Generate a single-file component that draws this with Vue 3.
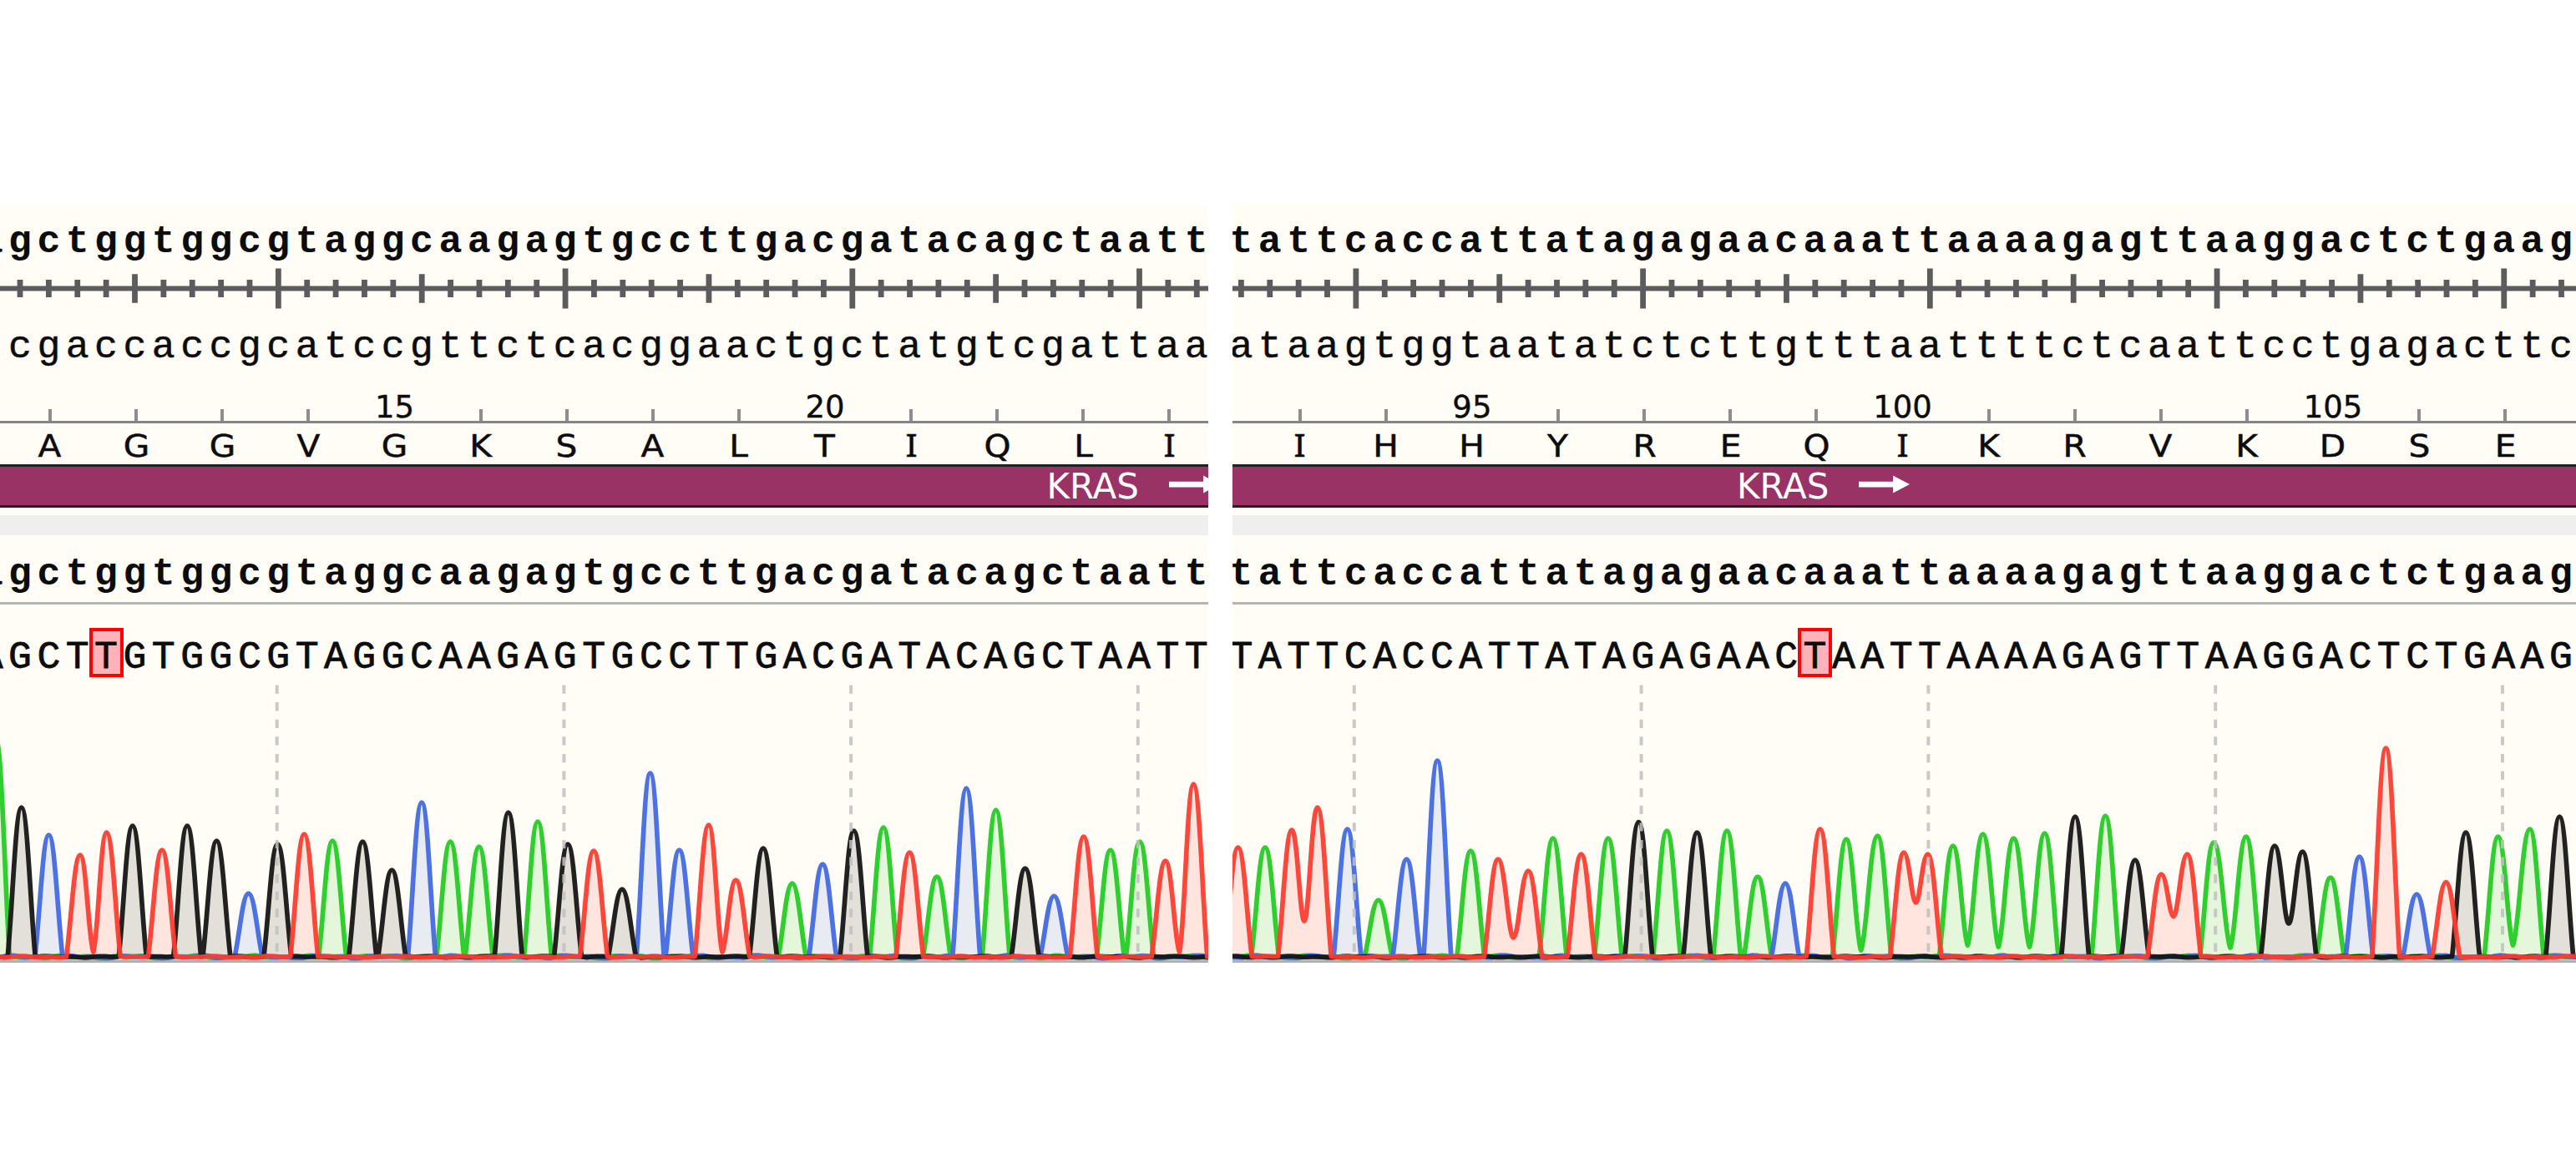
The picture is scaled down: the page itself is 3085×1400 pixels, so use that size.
<script setup>
const PITCH = 34.372
const BASE = 1145.5
const TOP = 820

const COLORS = { A: '#22cc22', C: '#4169e1', G: '#141414', T: '#ff3b30' }

const left = {
  id: 'left',
  width: 1447,
  shift: -27.55,
  tick0: -10.37,
  phase: 0,
  codonShift: 8.45,
  top: 'agctggtggcgtaggcaagagtgccttgacgatacagctaatt',
  bottom: 'tcgaccaccgcatccgttctcacggaactgctatgtcgattaa',
  read: 'AGCTTGTGGCGTAGGCAAGAGTGCCTTGACGATACAGCTAATT',
  mismatch: 4,
  aminos: 'AGGVGKSALTIQLI',
  numbers: { 4: '15', 9: '20' },
  label: 1253.5,
  guides: [331.7, 675.4, 1019.1, 1362.8],
  origin: 0,
  valleys: {},
  peaks: [
    [-5, 885], [25.7, 967], [58.4, 1000], [96, 1024], [127.6, 997], [158.8, 989], [194, 1018],
    [224.2, 989], [259.4, 1007], [297.6, 1070], [332.4, 1011], [364.3, 999], [398.2, 1007],
    [434.3, 1008], [469.3, 1042], [505, 961], [539.3, 1008], [573.7, 1014], [608.8, 973],
    [644, 984], [680, 1011], [711, 1019], [745, 1065], [778.7, 926], [813.5, 1018],
    [848.7, 988], [881.2, 1054], [914, 1016], [948.7, 1058], [985.2, 1035], [1022.5, 995],
    [1058, 991], [1089.3, 1021], [1122, 1050], [1157.3, 944], [1192.7, 970], [1227.7, 1040],
    [1262.3, 1073], [1297.8, 1002], [1329.8, 1018], [1365, 1008], [1395.7, 1031], [1429.3, 939],
  ],
}

const right = {
  id: 'right',
  width: 1609,
  shift: -6.8,
  tick0: 10.4,
  phase: 6,
  codonShift: 29.15,
  top: 'tattcaccattatagagaacaaattaaaagagttaaggactctgaag',
  bottom: 'ataagtggtaatatctcttgtttaattttctcaattcctgagacttc',
  read: 'TATTCACCATTATAGAGAACTAATTAAAAGAGTTAAGGACTCTGAAG',
  mismatch: 20,
  aminos: 'IHHYREQIKRVKDSE',
  numbers: { 2: '95', 7: '100', 12: '105' },
  label: 604,
  guides: [1621.8, 1965.6, 2309.4, 2653.2, 2997],
  origin: 1476,
  valleys: {
    2: [1562, 1103], 9: [1812.6, 1123], 21: [2228.7, 1138], 23: [2294.4, 1081],
    25: [2356.4, 1132], 26: [2393.3, 1134], 27: [2430.5, 1134], 32: [2602.9, 1097.5],
    34: [2671, 1135], 36: [2741, 1106], 44: [3009.5, 1132],
  },
  peaks: [
    [1482.7, 1015], [1515.1, 1015], [1547.1, 994], [1577.8, 967], [1613.6, 993], [1650.8, 1078],
    [1684.5, 1029], [1721.4, 911], [1761.3, 1019], [1794, 1029], [1830.2, 1043], [1859.8, 1004],
    [1893.6, 1023], [1925.9, 1004], [1962.4, 984.5], [1996.2, 995], [2032.4, 997], [2068.2, 995],
    [2105, 1050], [2138.1, 1058], [2179.8, 993], [2211.1, 1005], [2248.6, 1001], [2280, 1021],
    [2308.6, 1023], [2338.9, 1013], [2374.7, 999], [2411.5, 1004], [2448.7, 998], [2485.2, 978],
    [2521.4, 977], [2557, 1030], [2588.4, 1047], [2619.4, 1023], [2651.1, 1009], [2690, 1002],
    [2724.1, 1013], [2757.5, 1020], [2790.9, 1051], [2825.6, 1026], [2857.3, 896], [2894.2, 1071],
    [2929.3, 1056.5], [2953.1, 997], [2991.6, 1002], [3029.8, 993], [3065.3, 978],
  ],
}

const f = (n) => n.toFixed(1)

/* One continuous line per dye channel: noisy baseline joined to its peaks. */
function trace(panel, base) {
  const seed = { A: 1.3, C: 4.1, G: 2.2, T: 0.4 }[base]
  const amp = base === 'T' || base === 'G' ? 0.9 : 1.8
  const noise = (x) => BASE + 0.4 + amp * Math.sin(x / 7.3 + seed * 3) * Math.sin(x / 19 + seed)
  const end = panel.origin + panel.width + 30
  let x = panel.origin - 30
  let d = `M${f(x)} ${f(BASE)}`
  const flatTo = (stop) => {
    for (x += 6; x < stop - 3; x += 6) d += ` L${f(x)} ${f(noise(x))}`
  }
  const idx = []
  ;[...panel.read].forEach((c, i) => { if (c === base) idx.push(i) })
  let joined = null
  idx.forEach((i, n) => {
    const [px, py] = panel.peaks[i]
    const h = BASE - py
    if (joined) {
      const r = px - joined[0]
      const low = joined[1] > 1125
      d += ` C${f(joined[0] + r * 0.35)} ${f(joined[1] - (low ? h * 0.1 : 0))} ${f(px - r * 0.45)} ${f(py)} ${f(px)} ${f(py)}`
    } else {
      if (px - 16.5 > x) flatTo(px - 16.5)
      d += ` L${f(px - 16.5)} ${f(BASE)} C${f(px - 10.5)} ${f(BASE - h * 0.36)} ${f(px - 7)} ${f(py)} ${f(px)} ${f(py)}`
    }
    const next = idx[n + 1] === i + 1 ? panel.peaks[i + 1] : null
    joined = null
    if (next) {
      if (panel.valleys[i]) joined = panel.valleys[i]
      else if (next[0] - px < 34) joined = [(px + next[0]) / 2, 1140]
    }
    if (joined) {
      const r = joined[0] - px
      const low = joined[1] > 1125
      d += ` C${f(px + r * 0.45)} ${f(py)} ${f(joined[0] - r * 0.35)} ${f(joined[1] - (low ? h * 0.1 : 0))} ${f(joined[0])} ${f(joined[1])}`
      x = joined[0]
    } else {
      d += ` C${f(px + 7)} ${f(py)} ${f(px + 10.5)} ${f(BASE - h * 0.36)} ${f(px + 16.5)} ${f(BASE)}`
      x = px + 16.5
    }
  })
  flatTo(end)
  return d
}

/* phase: position of the first visible base within its block of ten */
const panels = [left, right].map((p) => ({
  ...p,
  ticks: [...p.top].map((_, i) => {
    const k = (i + p.phase) % 10
    return { x: p.tick0 + i * PITCH, h: k === 0 ? 48 : k === 5 ? 34.5 : 21 }
  }),
  traces: ['A', 'C', 'G', 'T'].map((b) => ({ b, color: COLORS[b], d: trace(p, b) })),
}))
</script>

<template>
  <main class="viewer">
    <section v-for="p in panels" :key="p.id" class="panel" :class="p.id">
      <div class="bases bold head">
        <div class="strip" :style="{ marginLeft: p.shift + 'px' }">
          <span v-for="(c, i) in p.top" :key="i" class="base">{{ c }}</span>
        </div>
      </div>
      <svg class="ruler" :width="p.width" height="49">
        <rect x="0" y="21.5" :width="p.width" height="6" />
        <rect v-for="(t, i) in p.ticks" :key="i" :x="t.x - 3.4" :y="24.5 - t.h / 2" width="6.8" :height="t.h" />
      </svg>
      <div class="bases complement">
        <div class="strip" :style="{ marginLeft: p.shift + 'px' }">
          <span v-for="(c, i) in p.bottom" :key="i" class="base">{{ c }}</span>
        </div>
      </div>
      <div class="numbers">
        <div class="strip" :style="{ marginLeft: p.codonShift + 'px' }">
          <span v-for="(c, i) in p.aminos" :key="i" class="codon">
            <span v-if="p.numbers[i]" class="num">{{ p.numbers[i] }}</span>
            <i v-else class="mark"></i>
          </span>
        </div>
      </div>
      <div class="aminos">
        <div class="strip" :style="{ marginLeft: p.codonShift + 'px' }">
          <span v-for="(c, i) in p.aminos" :key="i" class="amino" :class="{ serifed: c === 'I' }">{{ c }}</span>
        </div>
      </div>
      <div class="feature">
        <span class="gene" :style="{ marginLeft: p.label + 'px' }">KRAS</span>
        <svg class="arrow" width="64" height="46" viewBox="0 0 64 46">
          <path d="M-1 17.7H41V10.5L61 21L41 31.5V24.5H-1Z" fill="#fff" />
        </svg>
      </div>
      <div class="divider"></div>
      <div class="bases bold aligned">
        <div class="strip" :style="{ marginLeft: p.shift + 'px' }">
          <span v-for="(c, i) in p.top" :key="i" class="base">{{ c }}</span>
        </div>
      </div>
      <div class="bases read">
        <div class="strip" :style="{ marginLeft: p.shift + 'px' }">
          <span v-for="(c, i) in p.read" :key="i" class="base" :class="{ mismatch: i === p.mismatch }">{{ c }}</span>
        </div>
      </div>
      <svg class="chromatogram" :width="p.width" height="333" :viewBox="`${p.origin} ${TOP} ${p.width} 333`">
        <path v-for="t in p.traces" :key="t.b + 'f'" :d="t.d" :fill="t.color" fill-opacity="0.12" />
        <rect :x="p.origin" y="1149.5" :width="p.width" height="3.5" fill="#b0b0b0" />
        <path v-for="t in p.traces" :key="t.b" :d="t.d" fill="none" :stroke="t.color" stroke-opacity="0.94" stroke-width="5.7" stroke-linejoin="round" />
        <line v-for="g in p.guides" :key="g" :x1="g" :x2="g" y1="820.5" y2="1141" class="guide" />
      </svg>
    </section>
  </main>
</template>

<style>
body {
  margin: 0;
  background: #fff;
}
</style>

<style scoped>
.viewer {
  display: flex;
  align-items: flex-start;
  gap: 29px;
  width: 3085px;
  height: 1400px;
  overflow: hidden;
  background: #fff;
}
.panel {
  display: flex;
  flex-direction: column;
  flex: none;
  overflow: hidden;
  background: #fffdf5;
}
.left {
  width: 1447px;
  margin-top: 246px;
}
.right {
  width: 1609px;
  margin-top: 243px;
  padding-top: 3px;
}
.panel svg {
  display: block;
  flex: none;
}
.strip {
  display: flex;
}
.bases {
  flex: none;
  box-sizing: border-box;
  font-family: "Liberation Mono", monospace;
  font-size: 46.5px;
  color: #0c0c0c;
}
.base {
  position: relative;
  flex: none;
  width: 34.372px;
  text-align: center;
}
.bold {
  font-weight: 700;
}
.head {
  height: 75px;
  padding-top: 11.7px;
  line-height: 63.3px;
}
.ruler {
  fill: #5c5c5c;
}
.complement {
  height: 100px;
  line-height: 92.3px;
  -webkit-text-stroke: 0.5px #0c0c0c;
}
.numbers {
  flex: none;
  height: 34px;
  font: 37px/35.2px "DejaVu Sans", sans-serif;
  color: #0c0c0c;
  border-bottom: 3px solid #858585;
}
.codon {
  display: flex;
  justify-content: center;
  align-items: flex-end;
  flex: none;
  width: 103.11px;
  height: 34px;
}
.num {
  height: 34px;
  -webkit-text-stroke: 0.4px #0c0c0c;
}
.mark {
  width: 4px;
  height: 14px;
  background: #8e8e8e;
}
.aminos {
  flex: none;
  height: 49px;
  font: 37px/50px "DejaVu Sans", sans-serif;
  color: #0c0c0c;
  -webkit-text-stroke: 0.5px #0c0c0c;
}
.aminos .strip {
  align-items: baseline;
}
.amino {
  flex: none;
  width: 103.11px;
  text-align: center;
  transform: scaleX(1.1);
}
.serifed {
  font-family: "Noto Sans", sans-serif;
  font-size: 38px;
}
.feature {
  display: flex;
  flex: none;
  box-sizing: border-box;
  height: 52px;
  border-top: 3px solid #222;
  border-bottom: 3px solid #222;
  background: #993366;
  color: #fff;
  font: 42px/48px "DejaVu Sans", sans-serif;
}
.gene {
  flex: none;
  width: 146px;
}
.divider {
  flex: none;
  height: 24px;
  margin-top: 9px;
  background: #efefef;
}
.aligned {
  height: 83px;
  padding-top: 14px;
  line-height: 65.5px;
  border-bottom: 3px solid #b4b4b4;
}
.read {
  height: 96px;
  padding-top: 30.5px;
  line-height: 65.5px;
  -webkit-text-stroke: 0.8px #0c0c0c;
}
.mismatch {
  z-index: 1;
}
.mismatch::before {
  content: "";
  position: absolute;
  z-index: -1;
  left: -3.4px;
  top: -2.5px;
  box-sizing: border-box;
  width: 41px;
  height: 58.5px;
  border: 4px solid #ff0000;
  background: #ffb3b9;
}
.guide {
  stroke: #c0c0c0;
  stroke-opacity: 0.85;
  stroke-width: 4;
  stroke-dasharray: 10.3 10.3;
}
</style>
